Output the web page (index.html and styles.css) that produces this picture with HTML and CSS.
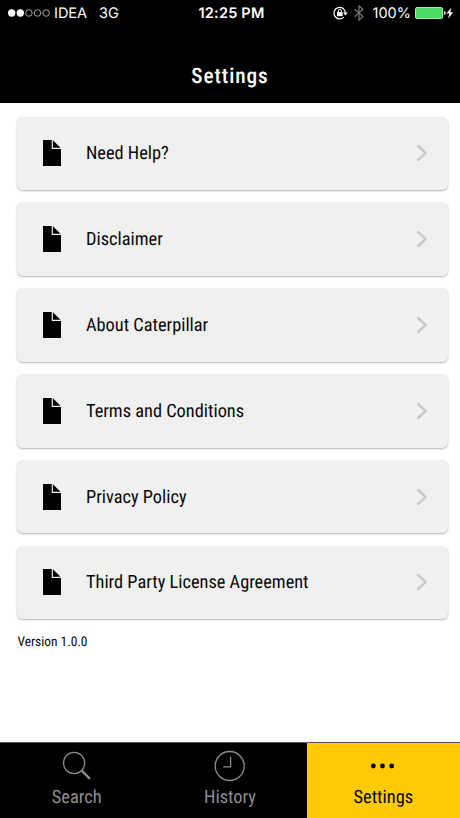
FILE: index.html
```html
<!DOCTYPE html>
<html lang="en">
<head>
    <meta charset="UTF-8">
    <meta name="viewport" content="width=device-width, initial-scale=1.0">
    <title>Settings</title>
    <link rel="stylesheet" href="styles.css">
</head>
<body>
    <svg class="defs" width="0" height="0">
        <symbol id="file" viewBox="0 0 18 26">
            <path d="M0 0h8.7v9H18v17H0z"/>
            <path d="M9.9 0.3L17.5 7.8H9.9z"/>
        </symbol>
        <symbol id="chevron" viewBox="0 0 12 18">
            <path d="M1.5 1.3L9.6 9l-8.1 7.7" fill="none" stroke="#c7c7c7" stroke-width="2.4"/>
        </symbol>
    </svg>

    <header class="header">
        <div class="status-bar">
            <div class="status-left">
                <svg width="43" height="10" viewBox="0 0 43 10">
                    <g fill="#fff">
                        <circle cx="3.7" cy="5" r="3.7"/>
                        <circle cx="12.3" cy="5" r="3.7"/>
                    </g>
                    <g fill="none" stroke="#ccc" stroke-width="0.8">
                        <circle cx="20.9" cy="5" r="3.3"/>
                        <circle cx="29.5" cy="5" r="3.3"/>
                        <circle cx="38.1" cy="5" r="3.3"/>
                    </g>
                </svg>
                <span class="carrier">IDEA</span>
                <span class="network">3G</span>
            </div>
            <div class="status-time">12:25 PM</div>
            <div class="status-right">
                <svg width="15" height="14" viewBox="0 0 15 14">
                    <path d="M10.8 11.1A5.7 5.7 0 1 1 12.4 7" fill="none" stroke="#fff" stroke-width="1.2"/>
                    <path d="M10 6.6h4.8l-2.4 2.8z" fill="#fff"/>
                    <rect x="4" y="6.2" width="5.6" height="4" fill="#fff"/>
                    <path d="M5.2 6.4V5a1.6 1.6 0 0 1 3.2 0v1.4" fill="none" stroke="#fff"/>
                </svg>
                <svg class="bluetooth" width="10" height="16" viewBox="0 0 10 16">
                    <path d="M0.7 4.2l8.2 7.4L5 15.2V0.8l3.9 3.6-8.2 7.4" fill="none" stroke="#777" stroke-width="1.2"/>
                </svg>
                <span class="percent">100%</span>
                <svg width="31" height="12" viewBox="0 0 31 12">
                    <rect x="0.5" y="0.5" width="27" height="11" rx="1.5" fill="#4cd964" stroke="#a5e8b0"/>
                    <path d="M28.8 4a2 2 0 0 1 0 4z" fill="#ddd"/>
                </svg>
                <svg class="bolt" width="8" height="12" viewBox="0 0 8 12">
                    <path d="M5.4 0.4L0.4 6.6h3L2 11.6l5.3-6.4H4.2z" fill="#fff"/>
                </svg>
            </div>
        </div>
        <h1 class="title">Settings</h1>
    </header>

    <main class="content">
        <ul class="menu">
            <li class="menu-item">
                <svg class="file-icon"><use href="#file"/></svg>
                <span class="label">Need Help?</span>
                <svg class="chevron"><use href="#chevron"/></svg>
            </li>
            <li class="menu-item">
                <svg class="file-icon"><use href="#file"/></svg>
                <span class="label">Disclaimer</span>
                <svg class="chevron"><use href="#chevron"/></svg>
            </li>
            <li class="menu-item">
                <svg class="file-icon"><use href="#file"/></svg>
                <span class="label">About Caterpillar</span>
                <svg class="chevron"><use href="#chevron"/></svg>
            </li>
            <li class="menu-item">
                <svg class="file-icon"><use href="#file"/></svg>
                <span class="label">Terms and Conditions</span>
                <svg class="chevron"><use href="#chevron"/></svg>
            </li>
            <li class="menu-item">
                <svg class="file-icon"><use href="#file"/></svg>
                <span class="label">Privacy Policy</span>
                <svg class="chevron"><use href="#chevron"/></svg>
            </li>
            <li class="menu-item">
                <svg class="file-icon"><use href="#file"/></svg>
                <span class="label">Third Party License Agreement</span>
                <svg class="chevron"><use href="#chevron"/></svg>
            </li>
        </ul>
        <p class="version">Version 1.0.0</p>
    </main>

    <nav class="tabs">
        <a class="tab">
            <svg width="30" height="32" viewBox="0 0 30 32" fill="none" stroke="#8c8c8c">
                <circle cx="12.1" cy="13" r="10.6" stroke-width="1.2"/>
                <path d="M19.7 20.6l8.3 8.3" stroke-width="2.2"/>
            </svg>
            <span>Search</span>
        </a>
        <a class="tab">
            <svg width="32" height="32" viewBox="0 0 32 32" fill="none" stroke="#8c8c8c" stroke-width="1.3">
                <circle cx="15.7" cy="16" r="14.5"/>
                <path d="M16.6 7v9.8H9.2"/>
            </svg>
            <span>History</span>
        </a>
        <a class="tab active">
            <svg width="30" height="32" viewBox="0 0 30 32">
                <circle cx="5.3" cy="16" r="2.4"/>
                <circle cx="14.5" cy="16" r="2.4"/>
                <circle cx="23.7" cy="16" r="2.4"/>
            </svg>
            <span>Settings</span>
        </a>
    </nav>
</body>
</html>
```
FILE: styles.css
```css
* {
    box-sizing: border-box;
}

body {
    margin: 0;
    height: 818px;
    display: flex;
    flex-direction: column;
    overflow: hidden;
    background: #fff;
    color: #080808;
    font-family: 'Roboto Condensed', Roboto, sans-serif;
    font-stretch: 75%;
    text-rendering: geometricPrecision;
}

.defs {
    position: absolute;
}

.header {
    height: 103px;
    background: #000;
    color: #fff;
}

.status-bar {
    display: grid;
    grid-template-columns: 1fr auto 1fr;
    align-items: center;
    height: 26px;
    padding: 0 6px 0 8px;
    font-family: Inter, sans-serif;
    font-stretch: normal;
    font-size: 14.5px;
    line-height: 20px;
}

.status-left,
.status-right {
    display: flex;
    align-items: center;
}

.status-right {
    justify-content: flex-end;
}

.carrier {
    margin-left: 3px;
}

.network {
    margin-left: 12px;
}

.status-left span,
.status-time,
.percent {
    padding-top: 1px;
}

.status-time {
    padding-left: 1px;
    font-weight: 600;
    letter-spacing: 0.2px;
}

.bluetooth {
    margin: 0 9px 0 6px;
}

.percent {
    margin-right: 4px;
}

.title {
    margin: 37px 0 0;
    font-size: 21.3px;
    font-weight: 500;
    line-height: 28px;
    letter-spacing: 0.9px;
    text-align: center;
}

.content {
    flex: 1;
    padding: 13.7px 12px 0 17px;
}

.menu {
    display: flex;
    flex-direction: column;
    gap: 12.3px;
    margin: 0;
    padding: 0;
    list-style: none;
}

.menu-item {
    display: flex;
    align-items: center;
    height: 73.5px;
    padding: 0 20px 0 26px;
    border-radius: 6px;
    background: #f0f0f0;
    box-shadow: 0 1px 2px rgba(0, 0, 0, 0.3);
}

.file-icon {
    width: 18px;
    height: 26px;
}

.label {
    flex: 1;
    margin-left: 25px;
    padding-top: 1px;
    font-size: 18.35px;
}

.chevron {
    width: 12px;
    height: 18px;
}

.version {
    margin: 15px 0 0 0.5px;
    font-size: 13.4px;
    line-height: 18px;
}

.tabs {
    display: grid;
    grid-template-columns: repeat(3, 1fr);
    height: 76px;
    border-top: 1px solid #555;
    background: #000;
}

.tab {
    display: flex;
    flex-direction: column;
    align-items: center;
    padding-top: 7px;
    color: #8c8c8c;
    font-size: 18.4px;
    line-height: 22px;
}

.tab span {
    margin-top: 5px;
}

.tab.active {
    background: #ffcb05;
    color: #080808;
}
```
